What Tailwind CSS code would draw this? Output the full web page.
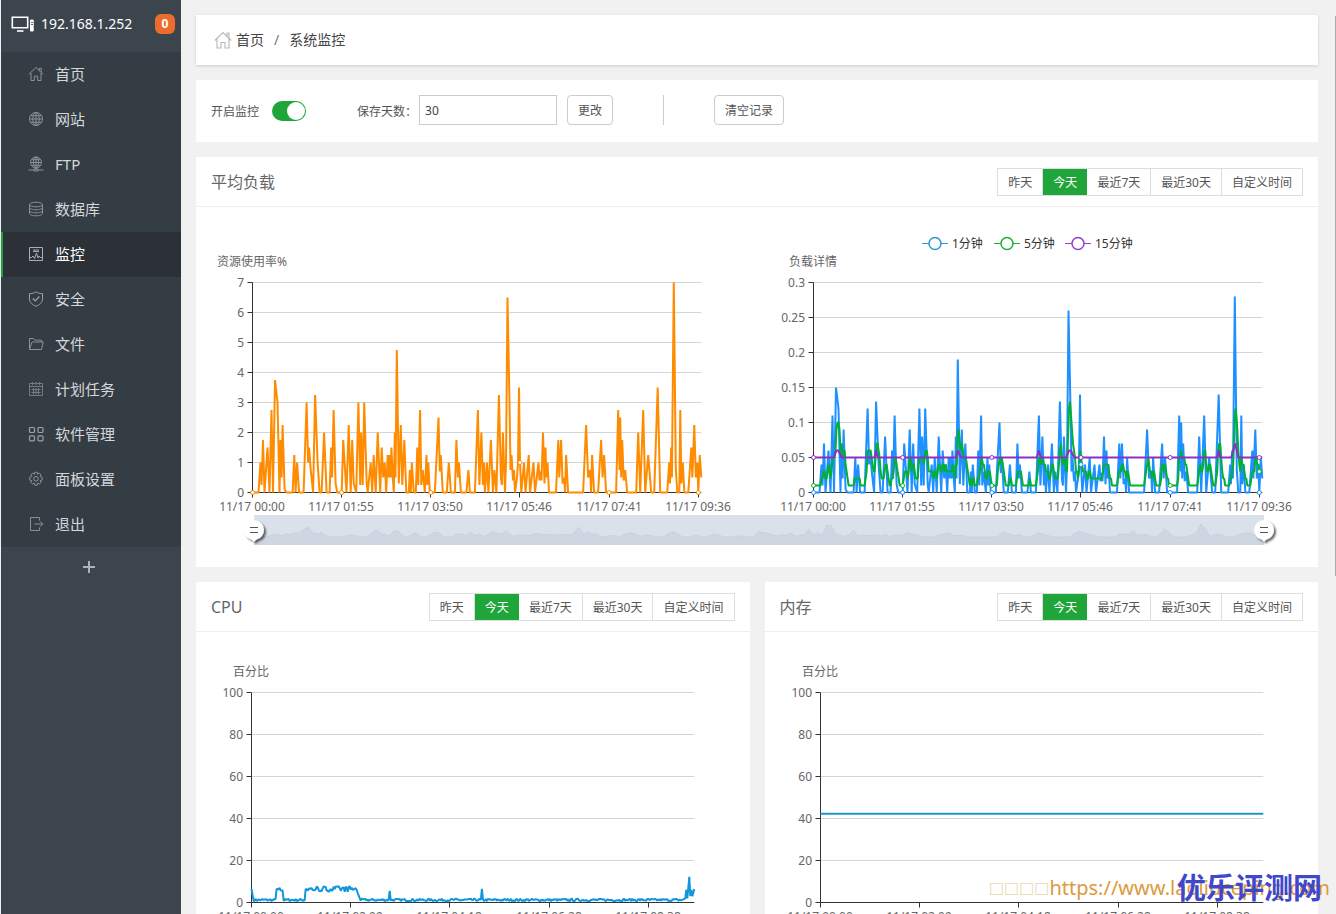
<!DOCTYPE html>
<html lang="zh-CN">
<head>
    <meta charset="UTF-8">
    <meta name="viewport" content="width=device-width, initial-scale=1.0">
    <title>系统监控</title>
    <script src="https://cdn.jsdelivr.net/npm/@tailwindcss/browser@4"></script>
</head>
<body class="relative flex h-screen overflow-hidden bg-[#f1f1f1] font-['Noto_Sans','Noto_Sans_CJK_SC',sans-serif] text-xs text-[#555]">
    <!-- Sidebar -->
    <aside class="ml-px flex w-[180px] shrink-0 flex-col bg-[#3c444d] text-[15px] text-[#d3d7da]">
        <div class="flex h-[52px] items-center pr-1.5 pl-2.5 pb-1 text-sm text-white">
            <svg class="mr-1.5 h-5 w-6" viewBox="0 0 24 20" fill="none" stroke="#fff" stroke-width="1.6">
                <path d="M1.3 3.3h15.4v10.4H1.3z" />
                <path d="M6 17h6.500" />
                <path d="M19.500 6h2.700v11h-2.700z" fill="#fff" stroke-width="1" />
                <path d="M20 8.500h2M20 10.500h2" stroke="#3c444d" stroke-width=".8" />
            </svg>
            <span>192.168.1.252</span>
            <span class="ml-auto flex h-5 w-5 items-center justify-center rounded-md bg-[#ec6c2e] text-xs font-bold">0</span>
        </div>
        <nav class="flex flex-col bg-[#353d44]">
            <a href="#" class="flex h-[45px] items-center gap-[11px] pb-0.5 pl-[27px]">
                <svg class="h-4 w-4 text-[#8b9196]" viewBox="0 0 16 16" fill="none" stroke="currentColor">
                    <path d="M.8 8.300L8 1.500l7.200 6.800M11.500 4.500V2.200h1.700v4M3 7v7.500h3.300v-4.300h3.400v4.300H13V7" />
                </svg>
                首页
            </a>
            <a href="#" class="flex h-[45px] items-center gap-[11px] pb-0.5 pl-[27px]">
                <svg class="h-4 w-4 text-[#8b9196]" viewBox="0 0 16 16" fill="none" stroke="currentColor">
                    <circle cx="8" cy="8" r="6.500" />
                    <ellipse cx="8" cy="8" rx="3.200" ry="6.500" />
                    <path d="M8 1.500v13M1.500 8h13M2.500 4.700h11M2.500 11.300h11" />
                </svg>
                网站
            </a>
            <a href="#" class="flex h-[45px] items-center gap-[11px] pb-0.5 pl-[27px]">
                <svg class="h-4 w-4 text-[#8b9196]" viewBox="0 0 16 16" fill="none" stroke="currentColor">
                    <circle cx="8" cy="6.500" r="5.500" />
                    <ellipse cx="8" cy="6.500" rx="2.600" ry="5.500" />
                    <path d="M8 1v13M2.500 6.500h11M3.500 3.700h9M3.500 9.300h9M.5 14h5.500M10 14h5.500" />
                    <path d="M6 13h4v2H6z" />
                </svg>
                FTP
            </a>
            <a href="#" class="flex h-[45px] items-center gap-[11px] pb-0.5 pl-[27px]">
                <svg class="h-4 w-4 text-[#8b9196]" viewBox="0 0 16 16" fill="none" stroke="currentColor">
                    <ellipse cx="8" cy="3.500" rx="6.500" ry="2.300" />
                    <path d="M1.500 3.500v9c0 1.300 2.900 2.300 6.500 2.300s6.500-1 6.500-2.300v-9M1.500 6.500c0 1.300 2.900 2.300 6.500 2.300s6.500-1 6.500-2.300M1.500 9.500c0 1.300 2.900 2.300 6.500 2.300s6.500-1 6.500-2.300" />
                </svg>
                数据库
            </a>
            <a href="#" class="flex h-[45px] items-center gap-[11px] border-l-2 border-[#20a53a] bg-[#2c3138] pb-0.5 pl-[25px] text-white">
                <svg class="h-4 w-4 text-[#a9adb1]" viewBox="0 0 16 16" fill="none" stroke="currentColor">
                    <path d="M1.500 1.500h13v13h-13zM5 4h6M5 5.500h6M2 11.500h1.500l1.500-1.500L6.500 12.500l2-5.500L10 12l1.200-2 1 1.500H14" />
                </svg>
                监控
            </a>
            <a href="#" class="flex h-[45px] items-center gap-[11px] pb-0.5 pl-[27px]">
                <svg class="h-4 w-4 text-[#9ba1a5]" viewBox="0 0 16 16" fill="none" stroke="currentColor">
                    <path d="M8 .8c2 1.300 4 1.800 6.500 1.800V8c0 3.500-3 5.800-6.500 7.200C4.500 13.800 1.500 11.500 1.500 8V2.600C4 2.600 6 2.100 8 .8z" />
                    <path d="M4.800 7.500l2.400 2.400 4.200-4.400" stroke-width="1.300" />
                </svg>
                安全
            </a>
            <a href="#" class="flex h-[45px] items-center gap-[11px] pb-0.5 pl-[27px]">
                <svg class="h-4 w-4 text-[#8b9196]" viewBox="0 0 16 16" fill="none" stroke="currentColor">
                    <path d="M1.500 13.500v-11h4l1.300 1.700h6.700V6M1.500 13.500L4 6h11.300l-1.800 7.500z" />
                </svg>
                文件
            </a>
            <a href="#" class="flex h-[45px] items-center gap-[11px] pb-0.5 pl-[27px]">
                <svg class="h-4 w-4 text-[#747b81]" viewBox="0 0 16 16" fill="none" stroke="currentColor">
                    <path d="M1.500 2.500h13v12h-13zM1.500 5.500h13M4.500 1v3M8 1v3M11.500 1v3M3.500 8.500h9M3.500 11.500h9M5.500 7v6.500M8 7v6.500M10.500 7v6.500" />
                </svg>
                计划任务
            </a>
            <a href="#" class="flex h-[45px] items-center gap-[11px] pb-0.5 pl-[27px]">
                <svg class="h-4 w-4 text-[#9ba1a5]" viewBox="0 0 16 16" fill="none" stroke="currentColor" stroke-width="1.200">
                    <rect x="1.500" y="1.500" width="5" height="5" rx="1" />
                    <rect x="10" y="1.500" width="5" height="5" rx="1" />
                    <rect x="1.500" y="9.800" width="5" height="5" rx="1" />
                    <rect x="10" y="9.800" width="5" height="5" rx="1" />
                </svg>
                软件管理
            </a>
            <a href="#" class="flex h-[45px] items-center gap-[11px] pb-0.5 pl-[27px]">
                <svg class="h-4 w-4 text-[#8b9196]" viewBox="0 0 16 16" fill="none" stroke="currentColor">
                    <path d="M6.700 1.300h2.600l.4 1.900 1.600-1.100 1.900 1.900-1.100 1.600 2.100.6v2.900l-2.100.5 1.100 1.700-1.900 1.800-1.600-1-.4 2.100H6.700l-.4-2.100-1.700 1-1.800-1.800 1-1.700-2.100-.5V6.200l2.100-.6-1-1.600 1.800-1.900 1.700 1.100z" />
                    <circle cx="8" cy="7.800" r="2.300" />
                </svg>
                面板设置
            </a>
            <a href="#" class="flex h-[45px] items-center gap-[11px] pb-0.5 pl-[27px]">
                <svg class="h-4 w-4 text-[#8b9196]" viewBox="0 0 16 16" fill="none" stroke="currentColor">
                    <path d="M11.500 4.500v-3h-9v13h9v-3M6.500 8h8M12.300 5.500L14.800 8l-2.500 2.500" />
                </svg>
                退出
            </a>
        </nav>
        <button type="button" aria-label="添加" class="flex h-10 items-center justify-center pr-1 text-[#aeb3b8]">
            <svg class="h-4 w-4" viewBox="0 0 16 16" fill="none" stroke="currentColor" stroke-width="2"><path d="M2 8h12M8 2v12" /></svg>
        </button>
    </aside>

    <main class="flex min-w-0 flex-1 flex-col gap-[15px] overflow-hidden pt-[15px] pr-[18px] pl-[15px]">
        <!-- Breadcrumb -->
        <div class="flex h-[50px] shrink-0 items-center bg-white pl-[18px] text-sm text-[#444] shadow-[0_1px_3px_rgba(0,0,0,0.15)]">
            <svg class="mr-1 h-[18px] w-[18px] text-[#bbb]" viewBox="0 0 18 18" fill="none" stroke="currentColor" stroke-width="1.200">
                <path d="M.8 9.500L9 1.500l8.200 8M13 5V2h2v5M3 8v9h4v-5.500h4V17h4V8" />
            </svg>
            <a href="#">首页</a>
            <span class="mx-2.5 text-[#777]">/</span>
            <a href="#">系统监控</a>
        </div>

        <!-- Monitor settings -->
        <div class="flex h-[62px] shrink-0 items-center bg-white pl-[15px]">
            <label for="monitor-switch" class="pt-0.5">开启监控</label>
            <input type="checkbox" id="monitor-switch" checked
                class="ml-[13px] h-5 w-[34px] appearance-none rounded-full bg-gray-300 p-px before:block before:h-[18px] before:w-[18px] before:rounded-full before:bg-white checked:bg-[#20a53a] checked:before:ml-[14px]">
            <label for="save-day" class="ml-[51px] pt-0.5">保存天数：</label>
            <input type="text" id="save-day" value="30" class="mb-0.5 ml-0.5 h-[30px] w-[138px] border border-[#ccc] px-[5px] text-[#444] outline-none">
            <button type="button" class="mb-0.5 ml-2.5 h-[30px] rounded-sm border border-[#ccc] px-2.5 pt-0.5">更改</button>
            <span class="mb-0.5 ml-[50px] h-[30px] w-px bg-[#ccc]"></span>
            <button type="button" class="mb-0.5 ml-[50px] h-[30px] rounded-sm border border-[#ccc] px-2.5 pt-0.5">清空记录</button>
        </div>

        <!-- Load -->
        <section class="shrink-0 bg-white">
            <div class="flex h-[50px] items-center justify-between border-b border-[#eee] px-[15px]">
                <h2 class="text-base text-[#666]">平均负载</h2>
                <div class="flex h-7 border-y border-l border-[#ddd]">
                    <button type="button" class="border-r border-[#ddd] px-2.5 pt-0.5">昨天</button>
                    <button type="button" class="bg-[#20a53a] px-2.5 pt-0.5 text-white">今天</button>
                    <button type="button" class="border-r border-[#ddd] px-2.5 pt-0.5">最近7天</button>
                    <button type="button" class="border-r border-[#ddd] px-2.5 pt-0.5">最近30天</button>
                    <button type="button" class="border-r border-[#ddd] px-2.5 pt-0.5">自定义时间</button>
                </div>
            </div>
            <svg id="load-chart" class="block h-[360px] w-full"></svg>
        </section>

        <div class="grid shrink-0 grid-cols-2 gap-[15px]">
            <section class="bg-white">
                <div class="flex h-[50px] items-center justify-between border-b border-[#eee] px-[15px]">
                    <h2 class="text-base text-[#666]">CPU</h2>
                    <div class="flex h-7 border-y border-l border-[#ddd]">
                        <button type="button" class="border-r border-[#ddd] px-2.5 pt-0.5">昨天</button>
                        <button type="button" class="bg-[#20a53a] px-2.5 pt-0.5 text-white">今天</button>
                        <button type="button" class="border-r border-[#ddd] px-2.5 pt-0.5">最近7天</button>
                        <button type="button" class="border-r border-[#ddd] px-2.5 pt-0.5">最近30天</button>
                        <button type="button" class="border-r border-[#ddd] px-2.5 pt-0.5">自定义时间</button>
                    </div>
                </div>
                <svg id="cpu-chart" class="block h-[330px] w-full"></svg>
            </section>
            <section class="bg-white">
                <div class="flex h-[50px] items-center justify-between border-b border-[#eee] px-[15px]">
                    <h2 class="text-base text-[#666]">内存</h2>
                    <div class="flex h-7 border-y border-l border-[#ddd]">
                        <button type="button" class="border-r border-[#ddd] px-2.5 pt-0.5">昨天</button>
                        <button type="button" class="bg-[#20a53a] px-2.5 pt-0.5 text-white">今天</button>
                        <button type="button" class="border-r border-[#ddd] px-2.5 pt-0.5">最近7天</button>
                        <button type="button" class="border-r border-[#ddd] px-2.5 pt-0.5">最近30天</button>
                        <button type="button" class="border-r border-[#ddd] px-2.5 pt-0.5">自定义时间</button>
                    </div>
                </div>
                <svg id="mem-chart" class="block h-[330px] w-full"></svg>
            </section>
        </div>
    </main>

    <!-- Scrollbar -->
    <div class="absolute top-4 right-0 h-[560px] w-px bg-[#aaa]"></div>

    <!-- Watermark -->
    <div class="absolute right-1.5 bottom-3 flex items-center text-xl whitespace-nowrap text-[#dd9a3c]"><span class="font-['DejaVu_Sans',sans-serif] text-base text-[#ecd9b4]">□□□□</span>https://www.laoliuceping.com</div>
    <div class="absolute right-3.5 bottom-2 font-['Noto_Sans_CJK_SC',sans-serif] text-[29px] leading-10 font-bold text-[#4047cc]">优乐评测网</div>

    <script>
        // [position, value] pairs, positions run from 0 to 448
        const usage = [
            [0,0],[6,0],[8,1],[9,.25],[10.5,1.75],[12,0],[15,1.5],[17,0],[19,2.75],[20.5,0],[22.5,3.75],[25,3],[27,0],[28,1.75],[29,.5],[30,2.25],[32,.1],[34,0],
            [40,0],[41.7,1.25],[43,0],[44.5,1],[46.5,0],[51,0],[54,3],[55.5,1],[56.5,1.5],[58,.8],[60.5,0],[62.5,3.25],[65,1],[67,0],[69,0],[71.5,2],[74,0],
            [77,0],[78.5,1.5],[79.5,.5],[81,2.75],[83,.3],[84.5,0],[89,0],[90.5,1.75],[93,.4],[93.8,0],[96,2.25],[98,0],[99.5,1.75],[101,.3],[103.5,0],
            [105.7,3],[107.5,.25],[108.5,2],[110,.25],[111.5,3],[114,.3],[115,0],[118,1],[119.5,0],[121,1.25],[123,0],[125,2],[127.5,0],[129,1.5],[130.5,.5],[132,1],[133.5,0],
            [135,1.25],[136,.5],[137,1.25],[138,.5],[138.7,1.5],[140,.5],[141,0],[142,2],[142.7,.5],[144,4.75],[146,.3],[148,2.25],[149.5,.25],[151.5,1.75],[153.5,0],
            [156,0],[157,.75],[158,0],[159,1],[161,0],[163,0],[164.5,1.5],[165.5,.25],[167.3,2.75],[168.5,.25],[170,.75],[172,0],[173.7,1.25],[174.5,.25],[175.5,1],[177,0],
            [182,0],[183.5,1],[185.7,2.5],[187,.7],[188,1.25],[190,0],[194,0],[196,1],[198,0],[202,0],[203.5,1.75],[205,.5],[206,1],[208,0],[213.5,0],[215.5,.75],[217,0],
            [222,0],[225,2.75],[226.5,.25],[228.5,2],[230,.25],[231,1],[232,0],[234,1],[235.5,0],[238,1.75],[240,0],[241.5,.75],[243.5,0],[246,3.25],[248,.5],[249,.25],[250,2],[252,0],
            [253,1],[254.5,6.5],[256.5,3],[257.5,.75],[258.5,1.25],[260,.4],[261,.75],[262,0],[264,.5],[265,1],[266,3.5],[267,1],[268.3,0],[271,1],[272.5,0],[275.7,1.25],[277,0],
            [280.5,1],[282,0],[285.5,1],[286.5,.4],[287.5,.7],[288.5,.4],[290,2],[291.5,.3],[292.5,1.5],[293.3,.5],[294.5,1],[296,0],[303,0],[305.3,1.75],[306.3,.5],[308,1.75],
            [309.5,.3],[311,.5],[312,0],[313,1.25],[315,0],[330,0],[333,2.25],[335,.5],[337,.75],[338,0],[339,1.25],[341,0],[345,0],[348,1.75],[349.5,.5],[351,1.25],[353,0],
            [363,0],[365,2.75],[366.3,.75],[367,2.5],[368,.5],[369,1.75],[370.5,.4],[372,.75],[374,0],[383,0],[385,2],[387,0],[390,2.75],[392,0],[395,1.25],[398,0],[401,0],
            [404.5,3.5],[407,0],[414,0],[416,1],[416.7,.3],[418,1.5],[418.7,.5],[420.5,7],[422.5,.8],[424,0],[426,0],[427,2.75],[428,.3],[429.5,1],[431,0],
            [435,0],[438,1.5],[439,.5],[441,2.25],[442.5,.5],[444,1],[445,0],[446.5,1.25],[448,.5]
        ];
        const load1 = usage.map(([x, v]) => [x, v * 0.04]);
        const load15 = [
            [0,.05],[20,.05],[23,.06],[25,.06],[28,.05],[61,.05],[62.5,.06],[64,.05],[142,.05],[144,.06],[147,.05],[223,.05],[225,.06],[227,.05],
            [252,.05],[255,.06],[257,.06],[260,.05],[403,.05],[404.5,.06],[406,.05],[417,.05],[419,.06],[421,.07],[424,.05],[448,.05]
        ];

        function valueAt(data, x) {
            for (let i = 1; i < data.length; i++) {
                if (x <= data[i][0]) {
                    const [x0, v0] = data[i - 1], [x1, v1] = data[i];
                    return v0 + (v1 - v0) * (x - x0) / (x1 - x0);
                }
            }
            return data[data.length - 1][1];
        }

        // 5 minute load follows the 1 minute load
        const load5 = [];
        let avg = 0.01;
        for (let x = 0; x <= 448; x++) {
            const v = valueAt(load1, x);
            avg += (v - avg) * (v > avg ? 0.27 : 0.3);
            avg = Math.max(avg, 0.01);
            load5.push([x, Math.round(avg * 100) / 100]);
        }

        let seed = 7;
        function rand() {
            seed = (seed * 16807) % 2147483647;
            return seed / 2147483647;
        }

        const cpu = [[0, 6.5], [2, 1]];
        for (let x = 3; x <= 431; x++) {
            let v = 0.6 + rand() * 1.2;
            if (x > 24 && x < 32) v = 5 + rand() * 2.2;
            if (x > 53 && x < 106) v = 5 + rand() * 2.8;
            if (x >= 106 && x < 109) v = 4.5 - (x - 106) * 1.2;
            if (x === 138) v = 5.5;
            if (x === 230) v = 6.5;
            cpu.push([x, v]);
        }
        cpu.push([433, 2], [434, 6], [435, 2], [436, 7], [437, 12.2], [438, 3], [439, 6], [440, 3], [442, 6.5]);

        const text = (x, y, anchor, str) => `<text x="${Math.floor(x)}" y="${y}" text-anchor="${anchor}" class="fill-[#666] text-xs">${str}</text>`;
        const line = (x1, y1, x2, y2, color) => `<path d="M${x1} ${y1}L${x2} ${y2}" stroke="${color}" fill="none" />`;

        // Axes, grid lines and series of one plot
        function plot(o) {
            const left = Math.floor(o.left) + 0.5, right = left + o.width, bottom = o.top + 210;
            const px = x => left + x * o.width / o.range;
            const py = v => bottom - v / o.max * 210;
            let out = text(left, o.top - 17, 'middle', o.name);
            o.labels.forEach((label, i) => {
                const y = bottom - i * 210 / (o.labels.length - 1);
                out += i ? line(left, y, right, y, '#d5d5d5') : '';
                out += line(left - 5, y, left, y, '#333') + text(left - 8, y + 4, 'end', label);
            });
            out += line(left, o.top, left, bottom, '#333') + line(left, bottom, right, bottom, '#333');
            o.times.forEach((time, i) => {
                const x = Math.round(px(i * o.step) - 0.5) + 0.5;
                out += line(x, bottom, x, bottom + 5, '#333') + text(x, bottom + 18, 'middle', time);
            });
            o.series.forEach(s => {
                const points = s.data.map(([x, v]) => px(x).toFixed(1) + ',' + py(v).toFixed(1)).join(' ');
                out += `<polyline points="${points}" fill="none" stroke="${s.color}" stroke-width="2" stroke-linejoin="bevel" />`;
            });
            o.series.filter(s => s.symbols).forEach(s => {
                o.times.forEach((time, i) => {
                    out += `<circle cx="${px(i * o.step)}" cy="${py(valueAt(s.data, i * o.step))}" r="2" fill="#fff" stroke="${s.color}" />`;
                });
            });
            return out;
        }

        function legend(x, y) {
            return [['1分钟', '#3398cc', 0], ['5分钟', '#22ac38', 72], ['15分钟', '#9040cc', 143]].map(([name, color, dx]) => `
                <g transform="translate(${x + dx} ${y})">
                    <path d="M0 0h26" stroke="${color}" />
                    <circle cx="13" cy="0" r="6" fill="#fff" stroke="${color}" stroke-width="1.500" />
                    <text x="30" y="4" class="fill-[#333] text-xs">${name}</text>
                </g>`).join('');
        }

        function handle(x, y) {
            return `
                <g transform="translate(${x} ${y})">
                    <path d="M-10 0a10 10 0 1 1 20 0a10 10 0 0 1 -8 9.800l-2 2l-2 -2a10 10 0 0 1 -8 -9.800z" fill="#fff" filter="url(#shadow)" />
                    <path d="M-4 -2.500h8M-4 2.500h8" stroke="#555" stroke-width="1.200" />
                </g>`;
        }

        function slider(x, y, width) {
            let points = '';
            for (let i = 0; i <= 448; i += 2) {
                const v = (valueAt(usage, i - 1) + 2 * valueAt(usage, i) + valueAt(usage, i + 1)) / 4;
                points += ` L${(x + i * width / 448).toFixed(1)} ${(y + 22 - v * 3).toFixed(1)}`;
            }
            return `
                <defs><filter id="shadow" x="-50%" y="-50%" width="200%" height="200%"><feDropShadow dx="2" dy="2" stdDeviation="1.200" flood-opacity="0.6" /></filter></defs>
                <rect x="${x}" y="${y}" width="${width}" height="30" fill="#dbe1eb" />
                <path d="M${x} ${y + 30}${points} L${x + width} ${y + 30}z" fill="#d0d6e1" />
                <path d="M${x} ${y + 22}${points}" fill="none" stroke="#c3cad6" stroke-width=".6" />
                ${handle(x, y + 15)}${handle(x + width, y + 15)}`;
        }

        function drawCharts() {
            const loadChart = document.getElementById('load-chart');
            const w = loadChart.getBoundingClientRect().width;
            const times = ['11/17 00:00', '11/17 01:55', '11/17 03:50', '11/17 05:46', '11/17 07:41', '11/17 09:36'];
            const common = { top: 75.5, width: w * 0.4, range: 448, step: 89, times };
            loadChart.innerHTML =
                plot({ ...common, left: w * 0.05, max: 7, name: '资源使用率%', labels: [0, 1, 2, 3, 4, 5, 6, 7],
                    series: [{ data: usage, color: '#ff8c00', symbols: true }] }) +
                plot({ ...common, left: w * 0.55, max: 0.3, name: '负载详情', labels: [0, 0.05, 0.1, 0.15, 0.2, 0.25, 0.3],
                    series: [
                        { data: load1, color: '#1e90ff', symbols: true },
                        { data: load5, color: '#00b038', symbols: true },
                        { data: load15, color: '#8b2fc9', symbols: true }
                    ] }) +
                legend(Math.round(w * 0.647), 36.5) +
                slider(Math.round(w * 0.05) + 2, 308, Math.round(w * 0.9));

            const percent = { top: 60.5, range: 442, step: 99, max: 100, name: '百分比', labels: [0, 20, 40, 60, 80, 100],
                times: ['11/17 00:00', '11/17 02:09', '11/17 04:18', '11/17 06:28', '11/17 08:38'] };
            const cpuChart = document.getElementById('cpu-chart');
            const half = cpuChart.getBoundingClientRect().width;
            cpuChart.innerHTML = plot({ ...percent, left: half * 0.1, width: half * 0.8, series: [{ data: cpu, color: '#1296db' }] });
            document.getElementById('mem-chart').innerHTML =
                plot({ ...percent, left: half * 0.1, width: half * 0.8, series: [{ data: [[0, 42.3], [442, 42.3]], color: '#1c96c5' }] });
        }

        new ResizeObserver(drawCharts).observe(document.getElementById('load-chart'));
    </script>
</body>
</html>
